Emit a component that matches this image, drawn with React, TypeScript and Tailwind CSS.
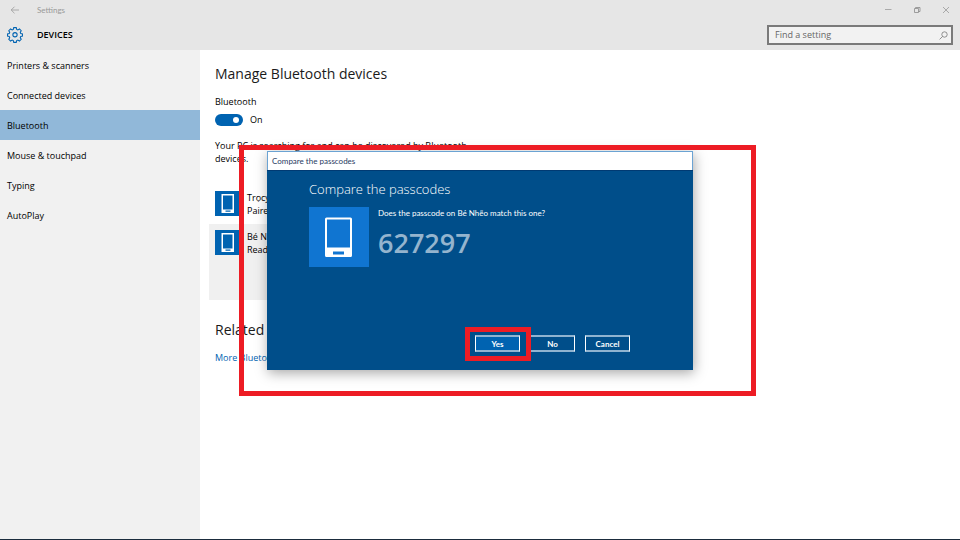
import type { ReactNode } from "react";

const navItems = [
  "Printers & scanners",
  "Connected devices",
  "Bluetooth",
  "Mouse & touchpad",
  "Typing",
  "AutoPlay",
];

function PhoneIcon({ className }: { className: string }) {
  return (
    <svg viewBox="0 0 60 60" className={className} aria-hidden="true">
      <path
        fill="#fff"
        fillRule="evenodd"
        d="M17.5 10.5h24a1.5 1.5 0 0 1 1.500 1.500v36.500a1.500 1.500 0 0 1-1.500 1.500h-24a1.500 1.500 0 0 1-1.500-1.500v-36.500a1.500 1.500 0 0 1 1.500-1.500zM18 12.500v28h23v-28zM24 44.500v3h11v-3z"
      />
    </svg>
  );
}

function SmallPhoneIcon() {
  return (
    <svg viewBox="0 0 25 25" className="size-[25px]" aria-hidden="true">
      <path fill="#fff" fillRule="evenodd" d="M6.500 3h12.500v19h-12.500zM8 4.500v14h9.500v-14zM10.500 19.500v1.200h5v-1.200z" />
    </svg>
  );
}

function GearIcon() {
  const teeth =
    "M6.600 0.700h2.800l.5 2 1.300.55 1.800-1.050 2 2-1.050 1.800.55 1.300 2 .5v2.400l-2 .5-.55 1.300 1.050 1.800-2 2-1.800-1.050-1.300.55-.5 2h-2.800l-.5-2-1.300-.55-1.800 1.050-2-2 1.050-1.800-.55-1.300-2-.5v-2.400l2-.5.55-1.300-1.050-1.800 2-2 1.800 1.050 1.300-.55z";
  return (
    <svg viewBox="-0.500 0 17 18" className="size-4" fill="none" stroke="#0063b1" strokeWidth="1.200" aria-hidden="true">
      <path d={teeth} />
      <circle cx="8" cy="8.700" r="2.400" />
    </svg>
  );
}

function Device({ name, status }: { name: string; status: string }) {
  return (
    <div className="flex gap-[7px]">
      <div className="size-[25px] bg-[#0063b1]">
        <SmallPhoneIcon />
      </div>
      <div className="leading-[13px]">
        <p>{name}</p>
        <p>{status}</p>
      </div>
    </div>
  );
}

function DialogButton({ children, primary = false }: { children: ReactNode; primary?: boolean }) {
  return (
    <button
      type="button"
      className={`flex h-[17px] w-[45px] items-center justify-center border-x border-y-2 border-x-white border-y-[#8fb3d0] font-['Lato','Noto_Sans',sans-serif] text-[8px] leading-none font-bold text-white ${
        primary ? "bg-[#0063b1]" : "bg-[#004e8a]"
      }`}
    >
      {children}
    </button>
  );
}

function PasscodeDialog() {
  return (
    <section
      role="dialog"
      aria-label="Compare the passcodes"
      className="absolute top-[151px] left-[267px] flex h-[219px] w-[426px] flex-col bg-[#004e8a] text-white shadow-[1px_3px_12px_rgba(0,0,0,0.35)]"
    >
      <div className="h-[19px] border border-b-0 border-[#6ba3d3] bg-white px-1 font-['Lato','Noto_Sans',sans-serif] text-[8px] leading-[18px] text-[#1f3a5f]">
        Compare the passcodes
      </div>
      <div className="flex-1 border-t border-[#003a73] pl-[42px]">
        <h2 className="pt-2 text-[13px] leading-5 font-light">Compare the passcodes</h2>
        <div className="flex gap-[9px] pt-2">
          <div className="size-[60px] bg-[#1075d1]">
            <PhoneIcon className="size-[60px]" />
          </div>
          <div>
            <p className="font-['Lato','Noto_Sans',sans-serif] text-[8px] leading-[13px]">
              Does the passcode on Bé Nhẽo match this one?
            </p>
            <p className="pt-[7px] text-[27px] leading-8 font-semibold text-[#94b4ce]">627297</p>
          </div>
        </div>
      </div>
      <div className="flex justify-end gap-[10px] pr-[63px] pb-[18px]">
        <DialogButton primary>Yes</DialogButton>
        <DialogButton>No</DialogButton>
        <DialogButton>Cancel</DialogButton>
      </div>
    </section>
  );
}

export default function App() {
  return (
    <div className="relative flex min-h-screen flex-col overflow-hidden border-b border-[#1b2c3d] bg-white font-['Open_Sans','Noto_Sans',sans-serif] text-[9px] text-black">
      <header className="bg-[#e6e6e6]">
        <div className="flex h-5 items-center text-[8px] text-[#999999]">
          <button type="button" aria-label="Back" className="ml-[10px] w-[27px]">
            <svg viewBox="0 0 10 8" className="h-2 w-[10px]" fill="none" stroke="#999" strokeWidth="0.800">
              <path d="M9 4H1.200M4.500 0.700L1.200 4l3.300 3.300" />
            </svg>
          </button>
          <span className="flex-1 font-['Lato','Noto_Sans',sans-serif]">Settings</span>
          <div className="flex items-center gap-[21px] pr-[10px]">
            <button type="button" aria-label="Minimize">
              <svg viewBox="0 0 8 8" className="size-2" stroke="#aaa" fill="none">
                <path d="M1 3.500h6.500" />
              </svg>
            </button>
            <button type="button" aria-label="Restore">
              <svg viewBox="0 0 8 8" className="size-2" stroke="#8a8a8a" strokeWidth="0.800" fill="none">
                <path d="M1.500 2.500h4v4h-4zM2.500 2.500v-1h4.500v4H5.500" />
              </svg>
            </button>
            <button type="button" aria-label="Close">
              <svg viewBox="0 0 8 8" className="size-2" stroke="#999" strokeWidth="0.800" fill="none">
                <path d="M1 1l6 6M7 1L1 7" />
              </svg>
            </button>
          </div>
        </div>
        <div className="flex h-[30px] items-center justify-between px-[7px]">
          <div className="flex items-center gap-[14px]">
            <GearIcon />
            <h1 className="text-[9px] font-semibold">DEVICES</h1>
          </div>
          <label className="flex h-5 w-[186px] items-center border-2 border-[#7a7a7a] bg-[#f2f2f2] pr-[3px] pl-[6px]">
            <input
              type="text"
              aria-label="Find a setting"
              placeholder="Find a setting"
              className="min-w-0 flex-1 bg-transparent text-[9px] outline-none placeholder:text-[#666666]"
            />
            <svg viewBox="0 0 9 9" className="size-[9px]" fill="none" stroke="#777" strokeWidth="0.800" aria-hidden="true">
              <circle cx="5.500" cy="3.500" r="2.700" />
              <path d="M3.500 5.500L0.600 8.400" />
            </svg>
          </label>
        </div>
      </header>

      <div className="flex flex-1">
        <nav className="w-[200px] shrink-0 bg-[#f1f1f1]">
          {navItems.map((item) => (
            <a
              key={item}
              href="#"
              className={`flex h-[30px] items-center px-[7px] pt-[2px] ${item === "Bluetooth" ? "bg-[#91b8d9]" : ""}`}
            >
              {item}
            </a>
          ))}
        </nav>

        <main className="w-[280px] pt-3 pl-[15px]">
          <h2 className="text-[14px] leading-6 text-[#1a1a1a]">Manage Bluetooth devices</h2>
          <p className="pt-[9px] leading-[14px]">Bluetooth</p>
          <label className="mt-1 flex h-[13px] items-center gap-[7px]">
            <input type="checkbox" defaultChecked aria-label="Bluetooth" className="peer sr-only" />
            <span className="flex h-3 w-7 items-center justify-end rounded-full bg-[#0063b1] pr-1">
              <span className="size-[6px] rounded-full bg-white" />
            </span>
            <span>On</span>
          </label>
          <p className="mt-[13px] leading-[13px]">
            Your PC is searching for and can be discovered by Bluetooth devices.
          </p>
          <div className="mt-[26px]">
            <Device name="Trọcy" status="Paired" />
          </div>
          <div className="mt-[7px] -ml-[6px] h-[76px] bg-[#f0f0f0] pt-[6px] pl-[6px]">
            <Device name="Bé Nhẽo" status="Ready to pair" />
          </div>
          <h2 className="pt-[18px] text-[14px] leading-6 text-[#1a1a1a]">Related settings</h2>
          <a href="#" className="mt-[9px] block leading-[14px] text-[#0063b1]">
            More Bluetooth options
          </a>
        </main>
      </div>

      <PasscodeDialog />
      <div className="pointer-events-none absolute top-[145px] left-[239px] h-[251px] w-[517px] border-5 border-[#ed1c24]" />
      <div className="pointer-events-none absolute top-[327px] left-[465px] h-[34px] w-[66px] border-5 border-[#ed1c24]" />
    </div>
  );
}
